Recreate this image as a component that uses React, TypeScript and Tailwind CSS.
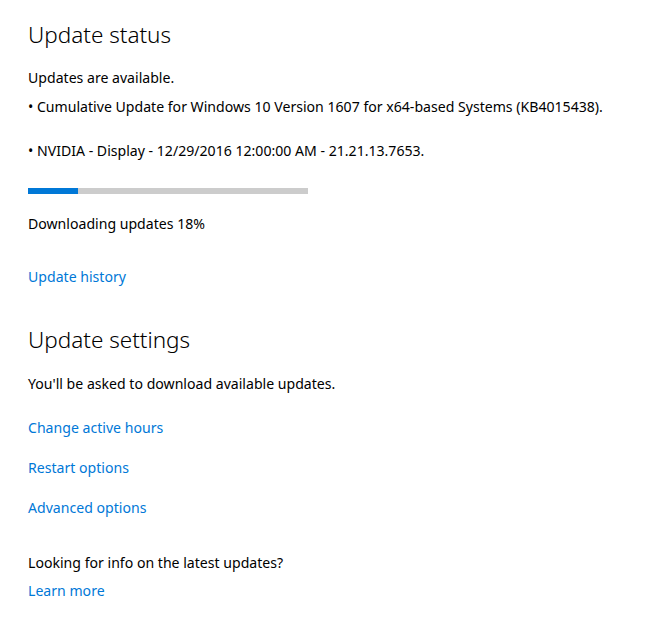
import React from "react";

const font = { fontFamily: '"Noto Sans", "Open Sans", sans-serif' };

function Link({ children, className = "" }: { children: React.ReactNode; className?: string }) {
  return <div className={`text-[14.1px] leading-[20px] text-[#0078d7] ${className}`}>{children}</div>;
}

export default function App() {
  return (
    <div className="w-[656px] h-[628px] bg-white text-black overflow-hidden" style={font}>
      <div className="flex flex-col pl-[28px] pt-[19px]">
        <h1 className="text-[22.5px] leading-[32px] font-light">Update status</h1>
        <p className="mt-[17px] text-[14.1px] leading-[20px]">Updates are available.</p>
        <p className="mt-[9px] text-[14.1px] leading-[20px]">• Cumulative Update for Windows 10 Version 1607 for x64-based Systems (KB4015438).</p>
        <p className="mt-[24px] text-[14.1px] leading-[20px]">• NVIDIA - Display - 12/29/2016 12:00:00 AM - 21.21.13.7653.</p>
        <div className="mt-[27px] w-[280px] h-[6px] bg-[#cccccc] flex">
          <div className="w-[50px] h-full bg-[#0078d7]" />
        </div>
        <p className="mt-[20px] text-[14.1px] leading-[20px]">Downloading updates 18%</p>
        <Link className="mt-[33px]">Update history</Link>
        <h2 className="mt-[37px] text-[22.5px] leading-[32px] font-light">Update settings</h2>
        <p className="mt-[18px] text-[14.1px] leading-[20px]">You'll be asked to download available updates.</p>
        <Link className="mt-[24px]">Change active hours</Link>
        <Link className="mt-[20px]">Restart options</Link>
        <Link className="mt-[20px]">Advanced options</Link>
        <p className="mt-[35px] text-[14.1px] leading-[20px]">Looking for info on the latest updates?</p>
        <Link className="mt-[8px]">Learn more</Link>
      </div>
    </div>
  );
}
